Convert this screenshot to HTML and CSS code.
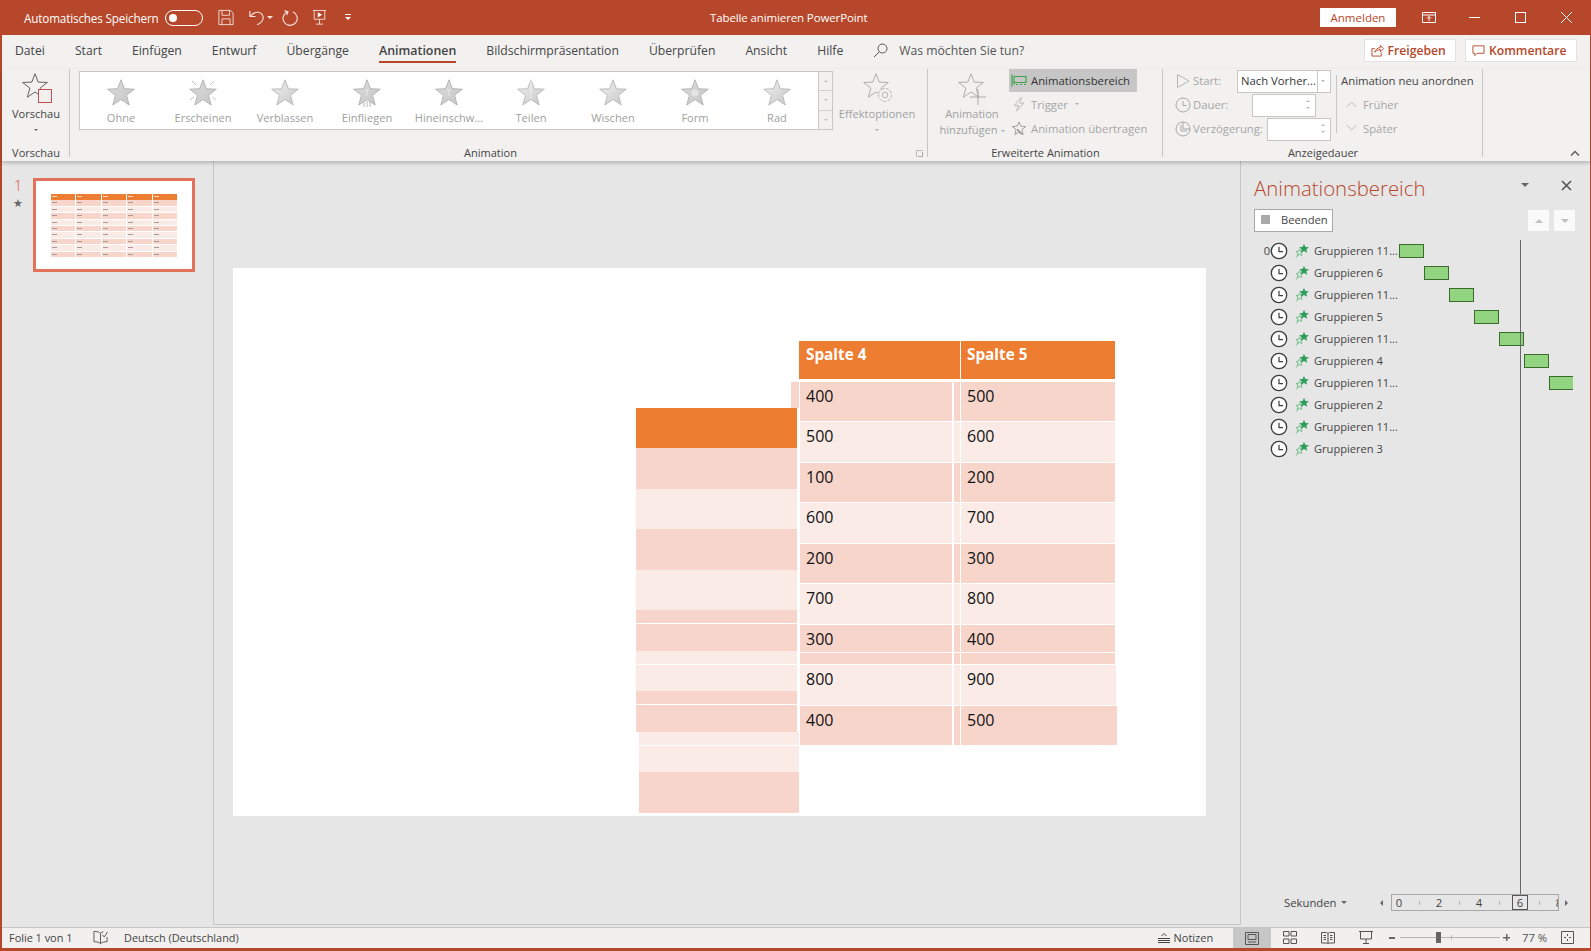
FILE: index.html
```html
<!DOCTYPE html>
<html lang="de">
<head>
<meta charset="utf-8">
<title>Tabelle animieren PowerPoint</title>
<link rel="stylesheet" href="styles.css">
</head>
<body>
<svg class="sprite" aria-hidden="true">
  <defs>
    <linearGradient id="g1" x1="0" y1="0" x2="1" y2="1"><stop offset="0" stop-color="#dcdcdc"/><stop offset="1" stop-color="#c6c6c6"/></linearGradient>
    <linearGradient id="g2" x1="0" y1="0" x2="1" y2="1"><stop offset="0" stop-color="#f0f0f0"/><stop offset=".5" stop-color="#dcdcdc"/><stop offset="1" stop-color="#c4c4c4"/></linearGradient>
    <symbol id="star" viewBox="0 0 28 28"><polygon points="14,.8 17.4,9.8 27.3,10.2 19.5,16.3 22.2,26 14,20.5 5.8,26 8.5,16.3 .7,10.2 10.6,9.8"/></symbol>
    <symbol id="clock" viewBox="0 0 18 18"><circle cx="9" cy="9" r="7.7" fill="#fff" stroke="#3c3c3c" stroke-width="1.3"/><path d="M9 4.8V9.6H13" fill="none" stroke="#3c3c3c" stroke-width="1.2"/></symbol>
    <symbol id="greenstar" viewBox="0 0 14 14"><polygon points="4.500,5 5.500,7.300 8,7.500 6.100,9.100 6.700,11.500 4.500,10.200 2.300,11.500 2.900,9.100 1,7.500 3.500,7.300" fill="none" stroke="#6fc08a" stroke-width="1"/><path d="M.8 13.800 3.400 11.200" stroke="#6fc08a"/><polygon points="9,0 10.500,3 13.900,3.200 11.300,5.400 12.200,8.800 9,7 5.800,8.800 6.700,5.400 4.100,3.200 7.500,3" fill="#2f9e5b"/></symbol>
  </defs>
</svg>
<div class="app">
  <header class="titlebar">
    <div class="qat">
      <span class="qat-label">Automatisches Speichern</span>
      <span class="toggle"><i></i></span>
      <svg class="qi save" viewBox="0 0 18 18"><path d="M1 1H14L17 4V17H1ZM4.500 1V6.500H13V1M4.500 17V10.500H13.500V17" fill="none" stroke="#fff" stroke-opacity=".85"/></svg>
      <svg class="qi undo" viewBox="0 0 20 18"><path d="M3 2V8H9M3.500 7.800C6 4.500 9 3 12 3.500C16 4.200 18 8 16.500 11.500C15.500 14 13 15.800 10.500 16.500" fill="none" stroke="#fff" stroke-opacity=".85" stroke-width="1.200"/></svg>
      <span class="qat-caret"></span>
      <svg class="qi redo" viewBox="0 0 18 18"><path d="M11.500 2.400A7.500 7.500 0 1 1 6 2.300M2.500 1.500 6.300 2.300 5 6" fill="none" stroke="#fff" stroke-opacity=".85" stroke-width="1.200"/></svg>
      <svg class="qi present" viewBox="0 0 17 18"><path d="M1 1H16M2.500 1V11H14.500V1M8.500 11V16.500M4.500 16.500H12.500" fill="none" stroke="#fff" stroke-opacity=".85"/><polygon points="6.500,3 11.500,6 6.500,9" fill="#fff"/></svg>
      <span class="qat-more"></span>
    </div>
    <div class="doc-title">Tabelle animieren PowerPoint</div>
    <div class="winctl">
      <button class="signin">Anmelden</button>
      <svg class="wi ribbon-display" viewBox="0 0 14 11"><path d="M.5.500H13.500V10.500H.5ZM.5 3H13.500M7 9V4.500M5 6.500 7 4.500 9 6.500" fill="none" stroke="#fff"/></svg>
      <svg class="wi minimize" viewBox="0 0 11 11"><path d="M0 5.500H11" stroke="#fff"/></svg>
      <svg class="wi maximize" viewBox="0 0 11 11"><rect x=".5" y=".5" width="10" height="10" fill="none" stroke="#fff"/></svg>
      <svg class="wi close" viewBox="0 0 11 11"><path d="M0 0 11 11M11 0 0 11" stroke="#fff"/></svg>
    </div>
  </header>

  <div class="window">
    <nav class="tabs">
      <span class="tab">Datei</span>
      <span class="tab">Start</span>
      <span class="tab">Einfügen</span>
      <span class="tab">Entwurf</span>
      <span class="tab">Übergänge</span>
      <span class="tab active">Animationen</span>
      <span class="tab">Bildschirmpräsentation</span>
      <span class="tab">Überprüfen</span>
      <span class="tab">Ansicht</span>
      <span class="tab">Hilfe</span>
      <span class="tell">
        <svg class="search" viewBox="0 0 15 15"><circle cx="9.500" cy="5.500" r="4.500" fill="none" stroke="#555"/><path d="M6.300 8.800 1 14" stroke="#555"/></svg>
        Was möchten Sie tun?
      </span>
      <span class="share-btns">
        <button class="share"><svg viewBox="0 0 14 14"><path d="M1 5V13H11V9M1 5H4M4 9C4.500 6 7 4 10 4V1.500L13.500 5 10 8.500V6C8 6 5.500 7 4 9Z" fill="none" stroke="#b7472a"/></svg>Freigeben</button>
        <button class="share comment"><svg viewBox="0 0 14 14"><path d="M1 2H13V10H5.500L3 12.500V10H1Z" fill="none" stroke="#b7472a"/></svg>Kommentare</button>
      </span>
    </nav>

    <section class="ribbon">
      <div class="group g-preview">
        <div class="gbody big">
          <svg class="big-icon" viewBox="0 0 32 32"><use href="#star" class="s-outline-dark" x="2" width="26" height="26"/><rect x="18.500" y="16.500" width="13" height="13" fill="#f2f1f0" stroke="#c0504d"/></svg>
          <span class="big-label">Vorschau</span>
          <span class="caret"></span>
        </div>
        <div class="glabel">Vorschau</div>
      </div>

      <div class="group g-anim">
        <div class="gbody anim-body">
          <div class="gallery">
            <div class="g-item"><svg viewBox="0 0 28 28"><use href="#star" class="s-flat"/></svg><span>Ohne</span></div>
            <div class="g-item"><svg viewBox="0 0 28 28"><use href="#star" class="s-flat"/><path d="M3 2 7 6M25 2 21 6M1 21 5 18M27 21 23 18" stroke="#c4c4c4"/></svg><span>Erscheinen</span></div>
            <div class="g-item"><svg viewBox="0 0 28 28"><use href="#star" class="s-soft"/></svg><span>Verblassen</span></div>
            <div class="g-item"><svg viewBox="0 0 28 28"><use href="#star" class="s-flat"/><path d="M12 11H16M14 11V17" stroke="#eee" stroke-width=".8"/><path d="M11 23V28M14 22V28M17 23V28" stroke="#9a9a9a" stroke-width=".7"/></svg><span>Einfliegen</span></div>
            <div class="g-item"><svg viewBox="0 0 28 28"><use href="#star" class="s-flat"/><path d="M12 11H16M14 11V17" stroke="#eee" stroke-width=".8"/></svg><span>Hineinschw...</span></div>
            <div class="g-item"><svg viewBox="0 0 28 28"><use href="#star" class="s-soft"/><path d="M14 1V20" stroke="#f2f2f2" stroke-width=".8"/></svg><span>Teilen</span></div>
            <div class="g-item"><svg viewBox="0 0 28 28"><use href="#star" class="s-soft"/></svg><span>Wischen</span></div>
            <div class="g-item"><svg viewBox="0 0 28 28"><use href="#star" class="s-flat"/><circle cx="14" cy="14" r="3.500" fill="#e4e4e4"/></svg><span>Form</span></div>
            <div class="g-item"><svg viewBox="0 0 28 28"><use href="#star" class="s-soft"/></svg><span>Rad</span></div>
            <div class="g-scroll">
              <span class="up"></span>
              <span class="down"></span>
              <span class="more"></span>
            </div>
          </div>
          <div class="big disabled effect">
            <svg class="big-icon" viewBox="0 0 32 32"><use href="#star" class="s-outline" x="2" width="26" height="26"/><circle cx="24" cy="22" r="6.500" fill="#f2f1f0" stroke="#b5b5b5" stroke-dasharray="3 1.400"/><circle cx="24" cy="22" r="2.800" fill="none" stroke="#b5b5b5"/></svg>
            <span class="big-label">Effektoptionen</span>
            <span class="caret"></span>
          </div>
        </div>
        <div class="glabel">Animation<i class="launcher"></i></div>
      </div>

      <div class="group g-adv">
        <div class="gbody adv-body">
          <div class="big disabled add">
            <svg class="big-icon" viewBox="0 0 32 32"><use href="#star" class="s-outline" x="2" width="26" height="26"/><path d="M22 16V32M14 24H30" stroke="#a8a8a8" fill="none"/></svg>
            <span class="big-label">Animation<br>hinzufügen<i class="caret inline"></i></span>
          </div>
          <div class="adv-list">
            <div class="small on"><svg viewBox="0 0 16 14"><path d="M1 1V13M3 3H15V9H3ZM3 9V11M5 11H7M9 11H11M13 11H15" fill="none" stroke="#3fa34d" stroke-width="1.200"/></svg>Animationsbereich</div>
            <div class="small off"><svg viewBox="0 0 16 16"><path d="M9.500 1 3 9H7.500L5.500 15 13 6.500H8.500L11 1Z" fill="none" stroke="#b8b8b8"/></svg>Trigger<i class="caret inline"></i></div>
            <div class="small off"><svg viewBox="0 0 16 16"><polygon points="8,1 10,5.500 15,6 11.200,9.200 12.400,14.500 8,11.800 3.600,14.500 4.800,9.200 1,6 6,5.500" fill="none" stroke="#9a9a9a"/><path d="M6 9 11 14" stroke="#9a9a9a" stroke-width="2"/></svg>Animation übertragen</div>
          </div>
        </div>
        <div class="glabel">Erweiterte Animation</div>
      </div>

      <div class="group g-time">
        <div class="gbody time-body">
          <div class="time-grid">
            <div class="time-row">
              <svg class="t-ico" viewBox="0 0 16 16"><polygon points="2.500,1.500 14,8 2.500,14.500" fill="none" stroke="#b5b5b5"/></svg>
              <span class="t-lab">Start:</span>
              <span class="combo"><span>Nach Vorher...</span><i></i></span>
            </div>
            <div class="time-row">
              <svg class="t-ico" viewBox="0 0 16 16"><circle cx="8" cy="8" r="7" fill="none" stroke="#a8a8a8"/><path d="M8 4V8.500H11.500" fill="none" stroke="#a8a8a8"/></svg>
              <span class="t-lab">Dauer:</span>
              <span class="spin dur"><i></i></span>
            </div>
            <div class="time-row">
              <svg class="t-ico" viewBox="0 0 16 16"><circle cx="8" cy="8" r="7" fill="none" stroke="#a8a8a8"/><path d="M8 1V8H15" fill="none" stroke="#a8a8a8"/><path d="M6 4V10H12" fill="none" stroke="#a8a8a8"/></svg>
              <span class="t-lab">Verzögerung:</span>
              <span class="spin delay"><i></i></span>
            </div>
          </div>
          <div class="order">
            <div class="order-title">Animation neu anordnen</div>
            <div class="order-item"><svg viewBox="0 0 12 8"><path d="M1 7 6 2 11 7" fill="none" stroke="#b5b5b5"/></svg>Früher</div>
            <div class="order-item"><svg viewBox="0 0 12 8"><path d="M1 1 6 6 11 1" fill="none" stroke="#b5b5b5"/></svg>Später</div>
          </div>
        </div>
        <div class="glabel">Anzeigedauer</div>
      </div>
      <div class="collapse"><svg viewBox="0 0 10 6"><path d="M1 5.500 5 1.500 9 5.500" fill="none" stroke="#555" stroke-width="1.300"/></svg></div>
    </section>

    <main class="main">
      <aside class="thumbs">
        <div class="thumb-index">
          <span class="num">1</span>
          <span class="num-star">★</span>
        </div>
        <div class="thumb">
          <div class="mini">
            <div class="mini-row head"><i></i><i></i><i></i><i></i><i></i></div>
            <div class="mini-row"><i></i><i></i><i></i><i></i><i></i></div>
            <div class="mini-row"><i></i><i></i><i></i><i></i><i></i></div>
            <div class="mini-row"><i></i><i></i><i></i><i></i><i></i></div>
            <div class="mini-row"><i></i><i></i><i></i><i></i><i></i></div>
            <div class="mini-row"><i></i><i></i><i></i><i></i><i></i></div>
            <div class="mini-row"><i></i><i></i><i></i><i></i><i></i></div>
            <div class="mini-row"><i></i><i></i><i></i><i></i><i></i></div>
            <div class="mini-row"><i></i><i></i><i></i><i></i><i></i></div>
            <div class="mini-row"><i></i><i></i><i></i><i></i><i></i></div>
          </div>
        </div>
      </aside>

      <div class="stage">
        <div class="slide">
          <div class="stub"></div>
          <div class="left-col">
            <i class="o"></i><i class="d"></i><i class="l"></i><i class="d"></i><i class="l"></i><i class="d"></i><b></b>
            <i class="d"></i><i class="l"></i><b></b><i class="l"></i><i class="d"></i><b></b><i class="d"></i>
            <i class="l in"></i><b></b><i class="l in"></i><i class="d in"></i>
          </div>
          <div class="tbl">
            <div class="tbl-head"><span>Spalte 4</span><span>Spalte 5</span></div>
            <div class="tr dark"><span class="c4">400</span><span class="st"></span><span class="c5">500</span></div>
            <div class="tr lite"><span class="c4">500</span><span class="st"></span><span class="c5">600</span></div>
            <div class="tr dark"><span class="c4">100</span><span class="st"></span><span class="c5">200</span></div>
            <div class="tr lite"><span class="c4">600</span><span class="st"></span><span class="c5">700</span></div>
            <div class="tr dark"><span class="c4">200</span><span class="st"></span><span class="c5">300</span></div>
            <div class="tr lite"><span class="c4">700</span><span class="st"></span><span class="c5">800</span></div>
            <div class="tr dark cut"><span class="c4">300</span><span class="st"></span><span class="c5">400</span></div>
            <div class="tr lite wide1"><span class="c4">800</span><span class="st"></span><span class="c5">900</span></div>
            <div class="tr dark wide2"><span class="c4">400</span><span class="st"></span><span class="c5">500</span></div>
          </div>
        </div>
      </div>

      <aside class="pane">
        <div class="pane-head">
          <h2>Animationsbereich</h2>
          <span class="pane-menu"></span>
          <svg class="pane-close" viewBox="0 0 11 11"><path d="M1 1 10 10M10 1 1 10" stroke="#555" stroke-width="1.600"/></svg>
        </div>
        <div class="pane-tools">
          <button class="stop"><i></i>Beenden</button>
          <span class="arrow-btn"><i class="au"></i></span>
          <span class="arrow-btn"><i class="ad"></i></span>
        </div>
        <div class="seq">
          <div class="seq-row"><span class="idx">0</span><svg class="ck"><use href="#clock"/></svg><svg class="gs"><use href="#greenstar"/></svg><span class="nm">Gruppieren 11...</span><span class="track"><i class="bar" style="margin-left:0"></i></span></div>
          <div class="seq-row"><span class="idx"></span><svg class="ck"><use href="#clock"/></svg><svg class="gs"><use href="#greenstar"/></svg><span class="nm">Gruppieren 6</span><span class="track"><i class="bar" style="margin-left:25px"></i></span></div>
          <div class="seq-row"><span class="idx"></span><svg class="ck"><use href="#clock"/></svg><svg class="gs"><use href="#greenstar"/></svg><span class="nm">Gruppieren 11...</span><span class="track"><i class="bar" style="margin-left:50px"></i></span></div>
          <div class="seq-row"><span class="idx"></span><svg class="ck"><use href="#clock"/></svg><svg class="gs"><use href="#greenstar"/></svg><span class="nm">Gruppieren 5</span><span class="track"><i class="bar" style="margin-left:75px"></i></span></div>
          <div class="seq-row"><span class="idx"></span><svg class="ck"><use href="#clock"/></svg><svg class="gs"><use href="#greenstar"/></svg><span class="nm">Gruppieren 11...</span><span class="track"><i class="bar" style="margin-left:100px"></i></span></div>
          <div class="seq-row"><span class="idx"></span><svg class="ck"><use href="#clock"/></svg><svg class="gs"><use href="#greenstar"/></svg><span class="nm">Gruppieren 4</span><span class="track"><i class="bar" style="margin-left:125px"></i></span></div>
          <div class="seq-row"><span class="idx"></span><svg class="ck"><use href="#clock"/></svg><svg class="gs"><use href="#greenstar"/></svg><span class="nm">Gruppieren 11...</span><span class="track"><i class="bar" style="margin-left:150px"></i></span></div>
          <div class="seq-row"><span class="idx"></span><svg class="ck"><use href="#clock"/></svg><svg class="gs"><use href="#greenstar"/></svg><span class="nm">Gruppieren 2</span><span class="track"></span></div>
          <div class="seq-row"><span class="idx"></span><svg class="ck"><use href="#clock"/></svg><svg class="gs"><use href="#greenstar"/></svg><span class="nm">Gruppieren 11...</span><span class="track"></span></div>
          <div class="seq-row"><span class="idx"></span><svg class="ck"><use href="#clock"/></svg><svg class="gs"><use href="#greenstar"/></svg><span class="nm">Gruppieren 3</span><span class="track"></span></div>
        </div>
        <div class="playhead"></div>
        <div class="timeline">
          <span class="secs">Sekunden<i></i></span>
          <i class="tl-left"></i>
          <div class="scale">
            <span>0</span><span class="tk"></span><span>2</span><span class="tk"></span><span>4</span><span class="tk"></span><span class="now"><em>6</em></span><span class="tk"></span><span>8</span>
          </div>
          <i class="tl-right"></i>
        </div>
      </aside>
    </main>

    <footer class="status">
      <span class="st-page">Folie 1 von 1</span>
      <svg class="st-spell" viewBox="0 0 16 15"><path d="M8 3C6.500 1.500 4 1 1 1V12C4 12 6.500 12.500 8 14V3ZM8 3C9 2 10 1.500 11 1.300M8 14C9.500 12.500 12 12 15 12V7" fill="none" stroke="#555"/><path d="M10 4.500 12 7 15.500 1.500" fill="none" stroke="#555"/></svg>
      <span class="st-lang">Deutsch (Deutschland)</span>
      <span class="st-notes"><svg viewBox="0 0 12 11"><path d="M0 6.500H12M0 8.500H12M0 10.500H12M3.500 4 6 1.500 8.500 4" fill="none" stroke="#444"/></svg>Notizen</span>
      <span class="view on"><svg viewBox="0 0 14 13"><path d="M.5.500H13.500V12.500H.5ZM3 2.500H11V7.500H3ZM3 10H11" fill="none" stroke="#555"/></svg></span>
      <span class="view"><svg viewBox="0 0 14 13"><path d="M.5.500H6V5H.5ZM8 .5H13.500V5H8ZM.5 8H6V12.500H.5ZM8 8H13.500V12.500H8Z" fill="none" stroke="#555"/></svg></span>
      <span class="view"><svg viewBox="0 0 14 13"><path d="M.5 1.500H5.500L7 2.500 8.500 1.500H13.500V12H8.500L7 12.500 5.500 12H.5ZM7 2.500V12M2.500 4.500H5M2.500 6.500H5M2.500 8.500H5M9 4.500H11.500M9 6.500H11.500M9 8.500H11.500" fill="none" stroke="#555"/></svg></span>
      <span class="view"><svg viewBox="0 0 14 13"><path d="M0 .500H14M1.500 .5V8H12.500V.5M7 8V12.500M4 12.500H10" fill="none" stroke="#555"/></svg></span>
      <span class="zoom">
        <i class="minus"></i>
        <span class="slider"><i class="thumbk"></i><i class="mid"></i></span>
        <i class="plus"></i>
      </span>
      <span class="pct">77 %</span>
      <svg class="fit" viewBox="0 0 13 13"><path d="M.5.500H12.500V12.500H.5ZM3 6.500H5M8 6.500H10M6.500 3V5M6.500 8V10" fill="none" stroke="#555"/></svg>
    </footer>
  </div>
</div>
</body>
</html>
```
FILE: styles.css
```css
* { box-sizing: border-box; }
html, body { margin: 0; padding: 0; }
body {
  width: 1591px;
  height: 951px;
  overflow: hidden;
  font-family: "Open Sans", "Noto Sans", sans-serif;
  font-size: 12px;
  color: #444;
}
button { font-family: inherit; }
.sprite { display: block; width: 0; height: 0; }
.app { width: 1591px; height: 951px; display: flex; flex-direction: column; background: #b7472a; }

/* title bar */
.titlebar { height: 35px; flex: none; display: flex; align-items: center; color: #fff; }
.qat { width: 710px; flex: none; display: flex; align-items: center; padding-left: 24px; }
.qat-label { font-size: 11.700px; width: 141px; flex: none; letter-spacing: -.15px; white-space: nowrap; }
.toggle { width: 38px; height: 16px; flex: none; border: 1.500px solid #fff; border-radius: 8px; display: flex; align-items: center; padding-left: 3px; }
.toggle i { width: 8px; height: 8px; border-radius: 50%; background: #fff; }
.qi { display: block; flex: none; }
.save { width: 16px; height: 17px; margin-left: 15px; }
.undo { width: 19px; height: 17px; margin-left: 13px; }
.qat-caret { width: 0; height: 0; border: 3px solid transparent; border-top-color: #fff; border-bottom: 0; margin-left: 1px; opacity: .85; }
.redo { width: 17px; height: 18px; margin-left: 9px; }
.present { width: 15px; height: 17px; margin-left: 13px; }
.qat-more { width: 6px; height: 7px; margin-left: 18px; border-top: 1px solid #fff; }
.qat-more::after { content: ""; display: block; margin-top: 2px; width: 0; height: 0; border: 3px solid transparent; border-top-color: #fff; border-bottom: 0; }
.doc-title { width: 160px; flex: none; font-size: 11.500px; white-space: nowrap; letter-spacing: -.12px; }
.winctl { margin-left: auto; display: flex; align-items: center; height: 100%; }
.signin { width: 76px; height: 19px; padding: 0; border: 0; background: #fff; color: #b7472a; font-size: 11.500px; margin-right: 26px; }
.wi { display: block; height: 11px; flex: none; }
.ribbon-display { width: 14px; margin-right: 33px; }
.minimize { width: 11px; margin-right: 35px; }
.maximize { width: 11px; margin-right: 35px; }
.close { width: 11px; margin-right: 19px; }

/* window frame */
.window { flex: 1; min-height: 0; display: flex; flex-direction: column; border-left: 2px solid #b7472a; border-right: 1px solid #b7472a; border-bottom: 3px solid #b7472a; background: #f2f1f0; }

/* tabs */
.tabs { height: 34px; flex: none; display: flex; align-items: flex-start; padding: 3px 0 0 13px; font-size: 12.200px; color: #444; }
.tab { margin-right: 30px; line-height: 25px; height: 25px; white-space: nowrap; position: relative; }
.tab.active { font-weight: 600; font-size: 12.400px; color: #444; }
.tab.active::after { content: ""; position: absolute; left: 0; right: 0; bottom: 0; height: 2.500px; background: #b7472a; }
.tell { display: flex; align-items: center; color: #555; margin-left: 0; white-space: nowrap; line-height: 25px; }
.search { width: 15px; height: 15px; margin-right: 11px; }
.share-btns { margin-left: auto; display: flex; gap: 9px; margin-right: 13px; margin-top: 1px; }
.share { height: 23px; width: 92.500px; padding: 0 0 0 6px; display: flex; align-items: center; gap: 4px; background: #fff; border: 1px solid #e4e2e0; color: #b7472a; font-size: 12.200px; font-weight: 600; }
.share.comment { width: 112px; }
.share svg { width: 13px; height: 13px; flex: none; }

/* ribbon */
.ribbon { height: 92px; flex: none; display: flex; position: relative; z-index: 2; box-shadow: 0 2px 4px rgba(0,0,0,.22); background: #f2f1f0; }
.group { display: flex; flex-direction: column; position: relative; flex: none; }
.group::after { content: ""; position: absolute; right: 0; top: 0; bottom: 4px; width: 1px; background: #c8c6c4; }
.gbody { flex: 1; min-height: 0; }
.glabel { height: 16px; line-height: 16px; text-align: center; font-size: 11px; color: #444; flex: none; position: relative; }
.g-anim .glabel { padding-right: 17px; }
.g-preview { width: 68px; }
.g-anim { width: 858px; }
.g-adv { width: 235px; }
.g-time { width: 320px; }
.big { display: flex; flex-direction: column; align-items: center; }
.g-preview .big { padding-top: 4px; }
.big-icon { width: 32px; height: 32px; display: block; flex: none; }
.big-label { font-size: 11.100px; line-height: 15px; text-align: center; white-space: nowrap; margin-top: .5px; }
.caret { width: 0; height: 0; border: 2.500px solid transparent; border-top-color: #666; border-bottom: 0; margin-top: 8px; display: block; }
.caret.inline { display: inline-block; margin: 0 0 2px 3px; border-top-color: #aaa; }
.disabled { color: #9f9f9f; }
.disabled .big-label { color: #a0a0a0; }
.disabled .caret { border-top-color: #aaa; }
.s-outline-dark { fill: none; stroke: #555; }
.s-outline { fill: none; stroke: #a8a8a8; }
.s-flat { fill: url(#g1); stroke: #b4b4b4; }
.s-soft { fill: url(#g2); stroke: #bcbcbc; }

.anim-body { display: flex; padding: 2px 0 0 9px; }
.gallery { width: 754px; height: 59px; display: flex; background: #fff; border: 1px solid #c8c6c4; flex: none; }
.g-item { width: 82px; flex: none; display: flex; flex-direction: column; align-items: center; padding-top: 7px; }
.g-item svg { width: 28px; height: 28px; display: block; overflow: visible; }
.g-item span { font-size: 11.100px; line-height: 14px; margin-top: 4px; color: #a0a0a0; white-space: nowrap; }
.g-scroll { margin-left: auto; width: 14px; flex: none; display: flex; flex-direction: column; border-left: 1px solid #c8c6c4; background: #f2f1f0; }
.g-scroll span { flex: 1; border-bottom: 1px solid #d4d2d0; display: flex; align-items: center; justify-content: center; }
.g-scroll span:last-child { border-bottom: 0; }
.g-scroll span::after { content: ""; width: 0; height: 0; border: 2.500px solid transparent; }
.g-scroll .up::after { border-bottom-color: #c0c0c0; border-top: 0; }
.g-scroll .down::after, .g-scroll .more::after { border-top-color: #c0c0c0; border-bottom: 0; }
.effect { width: 80px; margin-left: 4px; padding-top: 2px; }
.launcher { position: absolute; right: 5px; top: 5px; width: 7px; height: 7px; border: 1px solid #bbb; border-width: 1px 0 0 1px; }
.launcher::after { content: ""; position: absolute; right: 0; bottom: 0; width: 4px; height: 4px; border-right: 1px solid #aaa; border-bottom: 1px solid #aaa; }

.adv-body { display: flex; }
.add { width: 81px; flex: none; padding: 4px 0 0 7px; }
.add .big-label { line-height: 16px; margin-top: 1px; }
.adv-list { display: flex; flex-direction: column; }
.small { height: 23px; width: 128px; display: flex; align-items: center; font-size: 11.300px; padding-left: 2px; gap: 4px; white-space: nowrap; margin-bottom: 1px; }
.small svg { width: 16px; height: 15px; flex: none; }
.small.on { background: #c6c6c6; color: #333; }
.small.off { color: #a6a6a6; }

.time-body { display: flex; }
.time-grid { display: flex; flex-direction: column; width: 168px; flex: none; }
.time-row { height: 24px; display: flex; align-items: center; padding-left: 12px; }
.t-ico { width: 16px; height: 16px; flex: none; }
.t-lab { margin: 0 0 2px 2px; color: #a6a6a6; font-size: 11.300px; white-space: nowrap; }
.combo { margin-left: auto; width: 94px; height: 23px; background: #fff; border: 1px solid #c8c6c4; display: flex; align-items: center; font-size: 11.300px; color: #333; padding-left: 3px; white-space: nowrap; }
.combo span { flex: 1; margin-bottom: 2px; }
.combo i { width: 13px; height: 100%; border-left: 1px solid #c8c6c4; position: relative; flex: none; }
.combo i::after { content: ""; position: absolute; left: 3px; top: 9px; border: 2.500px solid transparent; border-top-color: #b5b5b5; border-bottom: 0; }
.spin { margin-left: auto; height: 23px; background: #fff; border: 1px solid #c8c6c4; position: relative; }
.spin.dur { width: 64px; margin-right: 15px; }
.spin.delay { width: 64px; }
.spin i { position: absolute; right: 5px; top: 5px; width: 0; height: 0; border: 2.500px solid transparent; border-bottom-color: #bbb; border-top: 0; }
.spin i::after { content: ""; position: absolute; left: -2.500px; top: 7px; border: 2.500px solid transparent; border-top-color: #bbb; border-bottom: 0; }
.order { flex: 1; margin-left: 5px; padding: 4px 0 0 5px; position: relative; }
.order::before { content: ""; position: absolute; left: 0; top: 6px; height: 58px; width: 1px; background: #c8c6c4; }
.order-title { font-size: 11.350px; color: #444; height: 15px; line-height: 15px; margin-bottom: 4px; white-space: nowrap; }
.order-item { display: flex; align-items: center; gap: 6px; height: 24px; margin-left: 5px; color: #a6a6a6; font-size: 11.300px; }
.order-item svg { width: 11px; height: 8px; flex: none; }
.collapse { align-self: flex-end; margin: 0 10px 5px auto; }
.collapse svg { display: block; width: 10px; height: 6px; }

/* main */
.main { flex: 1; min-height: 0; display: flex; background: #e6e6e6; }
.thumbs { width: 212px; flex: none; border-right: 1px solid #c6c6c6; display: flex; padding-top: 17px; margin-bottom: 2px; }
.thumb-index { width: 31px; flex: none; display: flex; flex-direction: column; align-items: center; }
.num { font-size: 15px; font-weight: 300; line-height: 14px; color: #d9604a; margin-left: 1px; }
.num-star { font-size: 11px; line-height: 14px; color: #666; margin-top: 3.500px; }
.thumb { width: 162px; height: 94px; background: #fff; border: 3px solid #e2725b; padding: 13px 15px 12px; }
.mini { display: flex; flex-direction: column; gap: 1px; width: 126px; }
.mini-row { flex: none; height: 5.400px; display: grid; grid-template-columns: repeat(5, 1fr); gap: 1px; }
.mini-row i { display: block; position: relative; }
.mini-row:nth-child(even) i { background: #f8d5ca; }
.mini-row:nth-child(odd) i { background: #fbebe6; }
.mini-row i::after { content: ""; position: absolute; left: 1px; top: 2px; width: 5px; height: 1px; background: #a89a94; }
.mini-row.head i { background: #ed7d31; height: 6px; }
.mini-row.head i::after { background: #fbd7bd; }
.stage { width: 1027px; flex: none; border-right: 1px solid #c6c6c6; border-bottom: 1px solid #c6c6c6; padding: 107px 0 0 19px; margin-bottom: 2px; }
.slide { width: 973px; height: 548px; background: #fff; position: relative; }

/* table fragments on the slide canvas */
.stub { position: absolute; left: 558px; top: 114px; width: 8px; height: 26px; background: #f8d5ca; }
.left-col { position: absolute; left: 403px; top: 140px; width: 163px; display: grid; grid-template-rows: 40px 41px 40px 41px 40px 13px 1px 27px 13px 1px 26px 13px 1px 27px 13px 1px 26px 41px; }
.left-col i { display: block; margin-right: 2px; }
.left-col .o { background: #ed7d31; }
.left-col .d { background: #f8d5ca; }
.left-col .l { background: #fbebe6; }
.left-col .in { margin: 0 0 0 3px; }
.tbl { position: absolute; left: 565px; top: 73px; width: 320px; font-size: 16px; color: #111; }
.tbl-head { height: 38px; margin-bottom: 3px; display: grid; grid-template-columns: 161px 154px; gap: 1px; font-weight: 700; font-size: 15.300px; color: #fff; margin-left: 1px; }
.tbl-head span { background: #ed7d31; padding: 2px 0 0 7px; line-height: 22px; }
.tbl-head span + span { padding-left: 6px; }
.tr { height: 39.450px; margin-bottom: 1px; display: grid; grid-template-columns: 152px 7px 154px; column-gap: 1px; padding-left: 2px; }
.tr span { display: block; padding: 2px 0 0 6px; line-height: 24px; }
.tr .st { padding: 0; margin-left: 1px; }
.dark span { background: #f8d5ca; }
.lite span { background: #fbebe6; }
.tr.cut { position: relative; }
.tr.cut::after { content: ""; position: absolute; left: 0; right: 2px; top: 27px; height: 1px; background: #fff; }
.tr.wide1 { grid-template-columns: 152px 7px 155px; }
.tr.wide2 { grid-template-columns: 152px 7px 156px; }

/* animation pane */
.pane { flex: 1; min-width: 0; display: flex; flex-direction: column; position: relative; padding-left: 13px; }
.pane-head { height: 48px; flex: none; display: flex; align-items: center; padding-top: 6px; }
.pane-head h2 { margin: 0; font-weight: 300; font-size: 20.400px; color: #b7472a; white-space: nowrap; }
.pane-menu { margin-left: auto; width: 0; height: 0; border: 4.500px solid transparent; border-top-color: #666; border-bottom: 0; margin-top: -6px; }
.pane-close { width: 11px; height: 11px; margin: -6px 18px 0 32px; }
.pane-tools { height: 23px; flex: none; display: flex; align-items: center; }
.stop { width: 79px; height: 23px; padding: 0 0 2px 6px; display: flex; align-items: center; gap: 11px; background: #fff; border: 1px solid #a8a8a8; color: #444; font-size: 11.200px; }
.stop i { width: 9px; height: 9px; background: #a9a9a9; flex: none; }
.arrow-btn { width: 21px; height: 21px; background: #fafafa; flex: none; display: flex; align-items: center; justify-content: center; margin-left: 5px; }
.arrow-btn:nth-child(2) { margin-left: auto; }
.arrow-btn:last-child { margin-right: 15px; }
.au { border: 4px solid transparent; border-bottom-color: #c0c0c0; border-top: 0; }
.ad { border: 4px solid transparent; border-top-color: #c0c0c0; border-bottom: 0; }
.seq { margin-top: 8px; display: flex; flex-direction: column; }
.seq-row { height: 22px; display: flex; align-items: center; font-size: 11.100px; color: #444; }
.idx { width: 16px; flex: none; text-align: right; line-height: 12px; }
.ck { width: 18px; height: 18px; flex: none; display: block; }
.gs { width: 14px; height: 14px; flex: none; margin-left: 7px; display: block; }
.nm { width: 85px; margin: 0 0 2px 5px; flex: none; white-space: nowrap; overflow: hidden; }
.track { width: 174px; height: 14px; flex: none; display: block; overflow: hidden; }
.bar { display: block; width: 25px; height: 14px; background: #92d480; border: 1px solid #3a6b2c; }
.playhead { position: absolute; left: 279px; top: 79px; height: 654px; width: 1px; background: #666; }
.timeline { margin-top: auto; margin-bottom: 16px; height: 17px; flex: none; display: flex; align-items: center; }
.secs { margin-left: 30px; width: 96px; flex: none; font-size: 11.300px; color: #444; display: flex; align-items: center; }
.secs i { margin-left: 4px; border: 3px solid transparent; border-top-color: #666; border-bottom: 0; }
.tl-left { border: 3.500px solid transparent; border-right-color: #666; border-left: 0; width: 0; height: 0; flex: none; margin-right: 8px; }
.scale { width: 168px; height: 17px; flex: none; border: 1px solid #a8a8a8; display: flex; overflow: hidden; font-size: 11.300px; color: #444; }
.scale span { width: 20px; flex: none; text-align: center; line-height: 15px; }
.scale span:first-child { margin-left: -3px; }
.scale .tk { position: relative; }
.scale .tk::after { content: ""; position: absolute; left: 10px; top: 6px; width: 1px; height: 4px; background: #b0b0b0; }
.scale .now em { font-style: normal; display: block; width: 16px; height: 15px; margin-left: 3px; border: 1px solid #555; line-height: 13px; }
.tl-right { border: 3.500px solid transparent; border-left-color: #666; border-right: 0; width: 0; height: 0; flex: none; margin-left: 6px; }

/* status bar */
.status { height: 21px; flex: none; display: flex; align-items: center; background: #f1f0ef; border-top: 1px solid #c6c6c6; font-size: 11px; color: #444; padding: 0 0 1px 7px; }
.st-page { width: 84px; flex: none; white-space: nowrap; letter-spacing: -.05px; }
.st-spell { width: 15px; height: 15px; flex: none; }
.st-lang { margin-left: 16px; font-size: 10.900px; white-space: nowrap; }
.st-notes { margin-left: auto; display: flex; align-items: center; gap: 4px; width: 75px; flex: none; }
.st-notes svg { width: 12px; height: 11px; flex: none; }
.view { width: 38px; height: 20px; flex: none; display: flex; align-items: center; justify-content: center; }
.view.on { background: #c6c6c6; margin-bottom: -1px; }
.view svg { width: 14px; height: 13px; }
.zoom { display: flex; align-items: center; margin-left: 4.500px; flex: none; }
.minus { width: 6px; height: 2px; background: #666; flex: none; }
.slider { width: 100px; height: 1px; background: #b5b5b5; margin: 0 3.500px 0 4.500px; position: relative; flex: none; }
.thumbk { position: absolute; left: 36px; top: -5px; width: 5px; height: 11px; background: #666; }
.mid { position: absolute; left: 51px; top: -2px; width: 1px; height: 5px; background: #b5b5b5; }
.plus { width: 7px; height: 7px; flex: none; background: linear-gradient(#666,#666) center/7px 1.500px no-repeat, linear-gradient(#666,#666) center/1.500px 7px no-repeat; }
.pct { width: 38.500px; flex: none; margin-left: 12px; white-space: nowrap; font-size: 11.300px; color: #555; }
.fit { width: 13px; height: 13px; flex: none; margin-right: 16.500px; }
```
